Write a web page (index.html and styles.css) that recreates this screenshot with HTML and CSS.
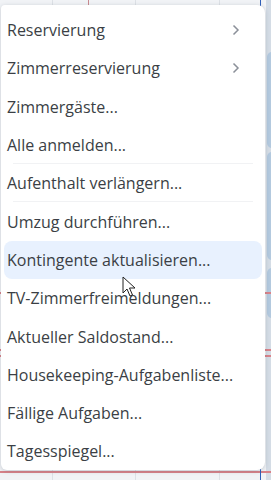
FILE: index.html
```html
<!DOCTYPE html>
<html lang="de">
<head>
<meta charset="utf-8">
<link rel="stylesheet" href="styles.css">
</head>
<body>
<div class="board">
  <div class="col c1"></div>
  <div class="col c2"></div>
  <div class="col c3"></div>
  <div class="col c4"></div>
  <div class="side">
    <div class="blk b1"></div>
    <div class="blk b2"></div>
    <div class="blk b3"></div>
  </div>
  <div class="redline r1"></div>
  <div class="redline r2"></div>
  <div class="redline r3"></div>
  <div class="redline r4"></div>
  <div class="blueline"></div>
</div>
<div class="menu">
  <div class="item">Reservierung<svg class="chev" viewBox="0 0 8 12"><path d="M1.5 1.5 L6 6 L1.5 10.5" fill="none" stroke="#8b9099" stroke-width="1.5"/></svg></div>
  <div class="item">Zimmerreservierung<svg class="chev" viewBox="0 0 8 12"><path d="M1.5 1.5 L6 6 L1.5 10.5" fill="none" stroke="#8b9099" stroke-width="1.5"/></svg></div>
  <div class="item">Zimmergäste...</div>
  <div class="item sep">Alle anmelden...</div>
  <div class="item sep">Aufenthalt verlängern...</div>
  <div class="item">Umzug durchführen...</div>
  <div class="item hover">Kontingente aktualisieren...</div>
  <div class="item">TV-Zimmerfreimeldungen...</div>
  <div class="item">Aktueller Saldostand...</div>
  <div class="item">Housekeeping-Aufgabenliste...</div>
  <div class="item">Fällige Aufgaben...</div>
  <div class="item">Tagesspiegel...</div>
</div>
<svg class="cursor" viewBox="0 0 14 22"><path d="M1 1 L1 17 L5 13 L8 20 L10.5 19 L7.5 12 L13 12 Z" fill="#fff" stroke="#222" stroke-width="1"/></svg>
</body>
</html>
```
FILE: styles.css
```css
html, body {
  margin: 0;
  padding: 0;
}
body {
  width: 271px;
  height: 480px;
  overflow: hidden;
  position: relative;
  background: #f1f3f6;
  font-family: "Open Sans", "Noto Sans", sans-serif;
}
.board {
  position: absolute;
  inset: 0;
}
.col {
  position: absolute;
  top: 0;
  bottom: 0;
  width: 1px;
  background: #dde1e6;
}
.c1 { left: 52px; }
.c2 { left: 88px; background: #c98a8f; height: 6px; }
.c3 { left: 135px; }
.c4 { left: 219px; }
.side {
  position: absolute;
  left: 266px;
  top: 0;
  width: 5px;
  height: 480px;
  background: #d4dce5;
}
.blk {
  position: absolute;
  left: 1px;
  width: 6px;
  background: #b3c9de;
  border-radius: 5px 0 0 5px;
}
.b1 { top: 52px; height: 96px; }
.b2 { top: 152px; height: 108px; }
.b3 { top: 268px; height: 50px; }
.redline {
  position: absolute;
  left: 0;
  right: 0;
  height: 2px;
  background: #d9838a;
}
.r1 { top: 292px; }
.r2 { top: 349px; }
.r3 { top: 355px; }
.r4 { top: 471px; }
.blueline {
  position: absolute;
  left: 260px;
  top: 0;
  width: 1px;
  height: 480px;
  background: #2f5fb8;
}
.menu {
  position: absolute;
  left: 1px;
  top: 5px;
  width: 264px;
  height: 465px;
  box-sizing: border-box;
  padding: 6px 3px 0 3px;
  background: #fff;
  border-radius: 4px 8px 8px 6px;
  box-shadow: 0 1px 4px rgba(60, 70, 90, 0.25);
  display: flex;
  flex-direction: column;
}
.item {
  height: 38.3px;
  flex: none;
  box-sizing: border-box;
  padding: 0 22px 0 3px;
  display: flex;
  align-items: center;
  justify-content: space-between;
  font-size: 16px;
  color: #3b3f45;
  position: relative;
  border-radius: 8px;
}
.item.sep::after {
  content: "";
  position: absolute;
  left: 9px;
  right: 9px;
  bottom: 0;
  height: 1px;
  background: #f1f2f4;
}
.item.hover {
  background: #e8f1fe;
}
.chev {
  width: 8px;
  height: 12px;
}
.cursor {
  position: absolute;
  left: 122px;
  top: 276px;
  width: 14px;
  height: 22px;
}
```
